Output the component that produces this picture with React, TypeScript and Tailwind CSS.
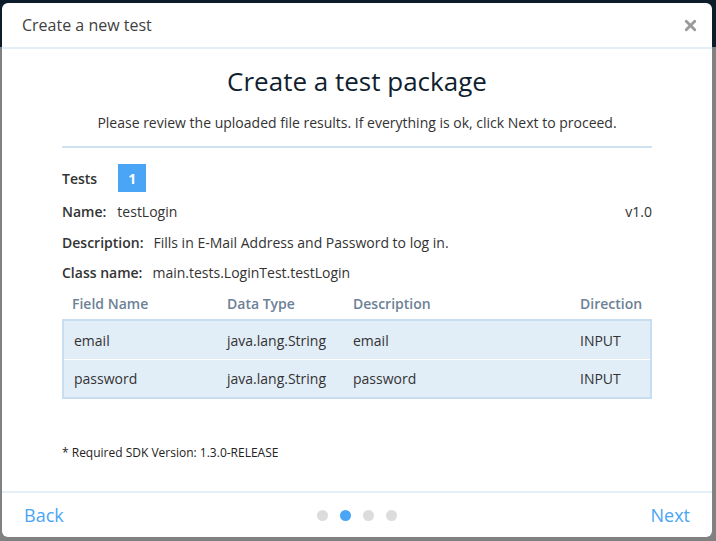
import { X } from "lucide-react";

const params = [
  { name: "email", type: "java.lang.String", desc: "email", dir: "INPUT" },
  { name: "password", type: "java.lang.String", desc: "password", dir: "INPUT" },
];

export default function App() {
  return (
    <div className="min-h-[541px] w-[716px] bg-[linear-gradient(to_bottom,#0c1c2a_0,#0c1c2a_47px,#818181_47px)] pl-[2px] pt-[3px] font-['Open_Sans',sans-serif]">
      <div className="flex h-[534px] w-[710px] flex-col rounded-md bg-white">
        {/* header */}
        <div className="flex h-[46px] shrink-0 items-center justify-between border-b-2 border-[#e3eef7] pl-5 pr-[13px]">
          <span className="text-[16px] text-[#3f3f3f]">Create a new test</span>
          <X size={17} strokeWidth={4} className="text-[#9a9a9a]" />
        </div>

        {/* body */}
        <div className="flex-1 px-[60px] pt-[15px]">
          <h1 className="text-center text-[26px] leading-[34px] font-medium text-[#0f1f30]">
            Create a test package
          </h1>
          <p className="mt-[15px] text-center text-[14px] leading-5 text-[#333]">
            Please review the uploaded file results. If everything is ok, click Next to proceed.
          </p>
          <div className="mt-[13px] h-[2px] bg-[#cfe2f1]" />

          <div className="mt-4 flex items-center gap-[21px]">
            <span className="text-[14px] font-semibold text-[#333]">Tests</span>
            <span className="flex h-7 w-7 items-center justify-center bg-[#4aa5f6] text-[14px] font-bold text-white">
              1
            </span>
          </div>

          <div className="mt-[10px] flex justify-between text-[14px] leading-5 text-[#333]">
            <div>
              <span className="font-semibold">Name:</span>
              <span className="ml-[11px]">testLogin</span>
            </div>
            <span>v1.0</span>
          </div>
          <div className="mt-[11px] text-[14px] leading-5 text-[#333]">
            <span className="font-semibold">Description:</span>
            <span className="ml-[10px]">Fills in E-Mail Address and Password to log in.</span>
          </div>
          <div className="mt-[10px] text-[14px] leading-5 text-[#333]">
            <span className="font-semibold">Class name:</span>
            <span className="ml-[10px]">main.tests.LoginTest.testLogin</span>
          </div>

          <div className="mt-[11px] grid h-[25px] grid-cols-[155px_126px_227px_1fr] pl-[10px] text-[14px] leading-5 font-semibold text-[#6d8196]">
            <span>Field Name</span>
            <span>Data Type</span>
            <span>Description</span>
            <span>Direction</span>
          </div>
          <div className="border-2 border-[#c8ddf0] bg-[#e1edf7]">
            {params.map((p, i) => (
              <div
                key={p.name}
                className={`grid h-[38px] grid-cols-[153px_126px_227px_1fr] items-center pl-[10px] text-[14px] text-[#333] ${
                  i > 0 ? "border-t border-white" : ""
                }`}
              >
                <span>{p.name}</span>
                <span>{p.type}</span>
                <span>{p.desc}</span>
                <span>{p.dir}</span>
              </div>
            ))}
          </div>

          <p className="mt-[46px] text-[12px] leading-4 text-[#222]">
            * Required SDK Version: 1.3.0-RELEASE
          </p>
        </div>

        {/* footer */}
        <div className="flex h-[46px] shrink-0 items-center justify-between border-t-2 border-[#e3eef7] px-[22px] text-[18px] text-[#4aa5f6]">
          <span>Back</span>
          <div className="flex items-center gap-3">
            <span className="h-[11px] w-[11px] rounded-full bg-[#dddcdc]" />
            <span className="h-[11px] w-[11px] rounded-full bg-[#4aa5f6]" />
            <span className="h-[11px] w-[11px] rounded-full bg-[#dddcdc]" />
            <span className="h-[11px] w-[11px] rounded-full bg-[#dddcdc]" />
          </div>
          <span>Next</span>
        </div>
      </div>
    </div>
  );
}
